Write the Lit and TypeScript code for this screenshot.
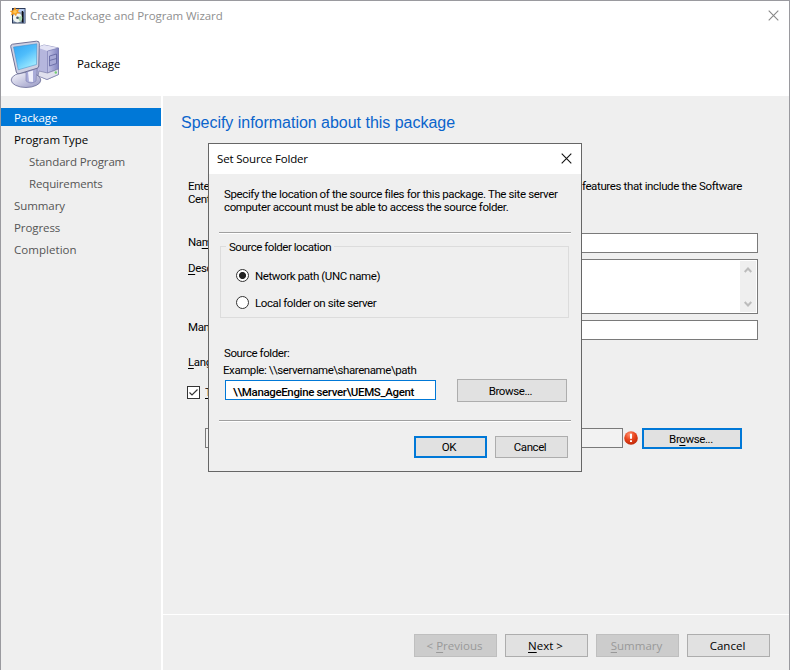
import { LitElement, html, css, svg } from "lit";
import { customElement } from "lit/decorators.js";
import { classMap } from "lit/directives/class-map.js";

interface Step { label: string; kind: "active" | "visited" | "pending"; sub?: boolean; cls: string }

const STEPS: Step[] = [
  { label: "Package", kind: "active", cls: "package" },
  { label: "Program Type", kind: "visited", cls: "type" },
  { label: "Standard Program", kind: "pending", sub: true, cls: "standard" },
  { label: "Requirements", kind: "pending", sub: true, cls: "req" },
  { label: "Summary", kind: "pending", cls: "summary" },
  { label: "Progress", kind: "pending", cls: "progress" },
  { label: "Completion", kind: "pending", cls: "completion" },
];

const cross = (color: string) => svg`<path d="M0.7 0.7L10.3 10.3M10.3 0.7L0.7 10.3" fill="none" stroke=${color} stroke-width="1.1"/>`;

@customElement("source-dialog")
export class SourceDialog extends LitElement {
  static styles = css`
    :host { display: flex; flex-direction: column; box-sizing: border-box; width: 374px; height: 329px; border: 1px solid #666; background: #efefef; font: 11.5px/13px Roboto, "Liberation Sans", sans-serif; letter-spacing: -0.4px; color: #000; }
    * { box-sizing: border-box; }
    .title { display: flex; align-items: center; justify-content: space-between; height: 30px; padding: 0 9px 0 8px; background: #fff; font: 11.5px/16px "Open Sans", "Noto Sans", sans-serif; letter-spacing: -0.17px; color: #000; flex: none; }
    .title svg { margin-top: -2px; }
    .body { display: flex; flex-direction: column; padding: 0 10px; }
    .intro { margin: 14px 0 0 5px; white-space: nowrap; letter-spacing: -0.375px; }
    .rule { height: 2px; background: #a0a0a0; border-bottom: 1px solid #fff; }
    .r1 { margin-top: 18px; }
    .group { margin: 12px 2px 0 1px; height: 72px; border: 1px solid #dcdcdc; display: flex; flex-direction: column; align-items: flex-start; padding-left: 5px; }
    .legend { margin: -7px 0 -1px; padding: 1px 3px 0; background: #efefef; letter-spacing: -0.46px; }
    .radio { display: flex; align-items: center; gap: 6px; margin-left: 10px; height: 13px; }
    .radio span:last-child { padding-top: 2px; }
    .a { margin-top: 16px; } .b { margin-top: 14px; }
    .dot { width: 13px; height: 13px; border: 1px solid #333; border-radius: 50%; background: #fff; }
    .on { background: radial-gradient(circle at center, #222 3.1px, #fff 3.9px); }
    .label { margin: 29px 0 0 5px; letter-spacing: -0.41px; }
    .example { margin: 4px 0 0 4px; letter-spacing: -0.43px; }
    .row { display: flex; align-items: flex-start; margin: 2px 4px 0 6px; justify-content: space-between; }
    .field { width: 211px; height: 20px; margin-top: 1px; border: 1px solid #0078d7; background: #fff; padding: 1px 0 0 7px; font: 500 11.5px/20px Roboto, sans-serif; letter-spacing: -0.36px; white-space: nowrap; color: #000; }
    .btn { display: flex; align-items: center; justify-content: center; border: 1px solid #adadad; background: #e1e1e1; padding: 1px 3px 0 0; letter-spacing: -0.42px; }
    .browse { width: 110px; height: 23px; }
    .r2 { margin-top: 18px; }
    .actions { display: flex; justify-content: flex-end; gap: 8px; margin: 14px 3px 0 0; }
    .small { width: 73px; height: 22px; }
    .primary { border: 2px solid #0078d7; }
  `;
  render() {
    return html`
      <div class="title"><span>Set Source Folder</span><svg width="11" height="11">${cross("#111")}</svg></div>
      <div class="body">
        <div class="intro">Specify the location of the source files for this package. The site server<br />computer account must be able to access the source folder.</div>
        <div class="rule r1"></div>
        <div class="group">
          <span class="legend">Source folder location</span>
          <div class="radio a"><span class="dot on"></span><span>Network path (UNC name)</span></div>
          <div class="radio b"><span class="dot"></span><span>Local folder on site server</span></div>
        </div>
        <div class="label">Source folder:</div>
        <div class="example">Example: \\\\servername\\sharename\\path</div>
        <div class="row"><div class="field">\\\\ManageEngine server\\UEMS_Agent</div><div class="btn browse">Browse...</div></div>
        <div class="rule r2"></div>
        <div class="actions"><div class="btn small primary">OK</div><div class="btn small">Cancel</div></div>
      </div>`;
  }
}

@customElement("app-root")
export class AppRoot extends LitElement {
  static styles = css`
    :host { display: flex; flex-direction: column; position: relative; box-sizing: border-box; width: 790px; height: 670px; overflow: hidden; border: 1px solid #9a9a9f; border-bottom: 0; background: #fff; font: 11.5px/16px "Open Sans", "Noto Sans", sans-serif; letter-spacing: -0.08px; color: #000; }
    * { box-sizing: border-box; }
    .titlebar { display: flex; align-items: center; height: 29px; padding: 0 10px 0 9px; color: #8f8f8f; flex: none; }
    .titlebar .name { flex: 1; margin-left: 4px; padding-top: 1px; }
    .banner { display: flex; align-items: center; height: 66px; padding: 2px 0 0 8px; flex: none; }
    .banner .name { margin-left: 16px; }
    .frame { display: flex; flex: 1; min-height: 0; background: #efefef; }
    .steps { display: flex; flex-direction: column; gap: 4px; width: 162px; padding-top: 12px; border-right: 2px solid #fff; flex: none; }
    .step { height: 18px; line-height: 20px; padding-left: 13px; color: #555; white-space: nowrap; }
    .sub { padding-left: 28px; letter-spacing: -0.15px; }
    .completion { letter-spacing: 0.05px; }
    .visited { color: #000; }
    .active { background: #0078d7; color: #fff; }
    .main { display: flex; flex-direction: column; flex: 1; min-width: 0; }
    .content { box-sizing: content-box; height: 501px; padding: 17px 0 0 18px; border-bottom: 1px solid #fff; font: 11.5px/13px Roboto, "Liberation Sans", sans-serif; letter-spacing: -0.39px; color: #000; }
    h1 { margin: 0; font: 16px/20px "Liberation Sans", Arial, sans-serif; letter-spacing: -0.02px; color: #0a64cc; }
    .intro { display: flex; justify-content: space-between; margin: 47px 47px 0 7px; height: 26px; }
    .cut { width: 22px; overflow: hidden; white-space: nowrap; }
    .tail { letter-spacing: -0.37px; }
    .form { display: grid; grid-template-columns: 90px 1fr; margin: 27px 31px 0 7px; row-gap: 6px; }
    .lbl { padding-top: 3px; }
    .low { padding-top: 1px; }
    .box { height: 20px; border: 1px solid #7a7a7a; background: #fff; }
    .area { height: 55px; display: flex; justify-content: flex-end; padding: 1px; }
    .scroll { width: 16px; background: #efefef; display: flex; flex-direction: column; justify-content: space-between; align-items: center; padding: 6px 0 5px; }
    .lang { height: 16px; margin: 16px 0 0 7px; }
    .check { display: flex; gap: 5px; align-items: center; margin: 14px 0 0 6px; height: 13px; }
    .check span { width: 4px; overflow: hidden; white-space: nowrap; padding-bottom: 3px; margin-bottom: -3px; }
    .tick { display: block; }
    .source { display: flex; margin: 29px 0 0 24px; }
    .path { width: 418px; background: #f2f2f2; }
    .warn { margin: 3px 4px 0 1px; }
    .btn { display: flex; align-items: center; justify-content: center; border: 1px solid #adadad; background: #e1e1e1; }
    .focus { width: 100px; height: 21px; border: 2px solid #0078d7; padding: 2px 2px 0 0; }
    .footer { display: flex; justify-content: flex-end; gap: 8px; padding: 19px 19px 0 0; letter-spacing: 0.02px; }
    .nav { width: 83px; height: 23px; white-space: pre; padding: 1px 2px 0 0; }
    .off { background: #ccc; border-color: #bfbfbf; color: #999; }
    u { text-underline-offset: 2px; }
    source-dialog { position: absolute; left: 207px; top: 142px; }
  `;

  private appIcon() {
    return svg`<svg width="16" height="17" viewBox="0 0 16 17">
      <rect x="2" y="1" width="13.500" height="15.500" fill="#2c3a58"/><rect x="4" y="2" width="10" height="3" fill="#b9cdf0"/>
      <rect x="3" y="5" width="9" height="10.500" fill="#8fa3bd"/><path d="M12.500 4v11" stroke="#111" stroke-width="1.500"/><path d="M14.300 2v14" stroke="#93a9d2"/>
      <circle cx="7.500" cy="10.800" r="4.600" fill="#f1f5f2"/>
      <path d="M7.500 10.800L11.600 8.800A4.600 4.600 0 0 1 10 14.700Z" fill="#a9d8b0"/><circle cx="7.500" cy="10.800" r="1.300" fill="#4c5a6c"/>
      <path d="M5 0l1.200 2.700L9.500 1.800 8 4.500 10.500 6.300 7 6.500 6 9.300 4 7 .8 8.500 1.800 5.700-.2 4 3 3.300Z" fill="#f59a1d"/><circle cx="5" cy="4.800" r="1.800" fill="#ffc855"/>
    </svg>`;
  }

  private computerIcon() {
    return svg`<svg width="52" height="50" viewBox="0 0 52 50">
      <defs>
        <linearGradient id="screen" x1="0" y1="0" x2=".6" y2="1"><stop offset="0" stop-color="#2fa4f2"/><stop offset=".5" stop-color="#4fbdfb"/><stop offset="1" stop-color="#a0ecff"/></linearGradient>
        <linearGradient id="front"><stop offset="0" stop-color="#c3c4e6"/><stop offset="1" stop-color="#8083c0"/></linearGradient>
        <linearGradient id="base" x1="0" y1="0" x2="1" y2="1"><stop offset="0" stop-color="#fafaff"/><stop offset="1" stop-color="#9495c2"/></linearGradient>
      </defs>
      <path d="M28 8.500L35 6 49.500 9 49.500 35.500 38 40.500 28 36Z" fill="#b5b6dd" stroke="#8588b8" stroke-width=".8"/>
      <path d="M28 8.500L35 6 49.500 9 38.500 12Z" fill="#e3e3f5"/><path d="M38.500 12L49.500 9V30L38.500 34Z" fill="url(#front)" stroke="#7476ad" stroke-width=".6"/>
      <path d="M40.500 17L47.500 15V24.500L40.500 27ZM40.500 21.500L47.500 19.500" fill="#a7a9d6" stroke="#5e629d" stroke-width=".8"/>
      <path d="M30 32L38.500 34 49.500 30V35.500L38 40.500 29 37Z" fill="#e0e0ee" stroke="#7b7da8" stroke-width=".7"/><circle cx="46.800" cy="33.500" r="1.200" fill="#72cf70"/>
      <ellipse cx="17" cy="41" rx="14.800" ry="7.500" fill="url(#base)" stroke="#76789f" stroke-width=".9"/>
      <path d="M17 32L28 29 27 42Q22 46 17 42Z" fill="#a9abd8" stroke="#8082b0" stroke-width=".6"/><path d="M19 33L24 31.500 24 43 20 42.500Z" fill="#f0f0fc"/>
      <path d="M1.700 7.500Q1.600 5.600 3.500 5.200L27.500 2.200Q30.400 2 30.300 4.500L29.800 27Q29.600 28.800 28 29.300L10 34.800Q7.800 35 7.300 33Z" fill="#cfd0e2" stroke="#6f7196" stroke-width="1"/>
      <path d="M4.500 8L27.800 4.800 27.500 25.500 9.300 30.800Z" fill="url(#screen)" stroke="#3c8bc7" stroke-width=".5"/>
    </svg>`;
  }

  render() {
    return html`
      <div class="titlebar">${this.appIcon()}<span class="name">Create Package and Program Wizard</span><svg width="11" height="11">${cross("#888")}</svg></div>
      <div class="banner">${this.computerIcon()}<span class="name">Package</span></div>
      <div class="frame">
        <div class="steps">${STEPS.map((s) => html`<div class=${classMap({ step: true, [s.kind]: true, sub: !!s.sub, [s.cls]: true })}><span>${s.label}</span></div>`)}</div>
        <div class="main">
          <div class="content">
            <h1>Specify information about this package</h1>
            <div class="intro"><span class="cut">Enter<br />Cente</span><span class="tail">features that include the Software</span></div>
            <div class="form">
              <span class="lbl cut">Na<u>m</u>e</span><div class="box"></div>
              <span class="lbl cut"><u>D</u>esc</span>
              <div class="box area"><div class="scroll">
                <svg width="8" height="6"><path d="M.7 5L4 1.500 7.300 5" fill="none" stroke="#bcbcbc" stroke-width="2"/></svg>
                <svg width="8" height="6"><path d="M.7 1L4 4.500 7.300 1" fill="none" stroke="#bcbcbc" stroke-width="2"/></svg>
              </div></div>
              <span class="lbl low cut">Manu</span><div class="box"></div>
            </div>
            <div class="lang cut"><u>L</u>ang</div>
            <div class="check"><svg class="tick" width="13" height="13"><rect x=".5" y=".5" width="12" height="12" fill="#fff" stroke="#333"/><path d="M2.500 6.500L5 9 10.500 3.500" fill="none" stroke="#333" stroke-width="1.200"/></svg><span><u>T</u></span></div>
            <div class="source">
              <div class="box path"></div>
              <svg class="warn" width="14" height="14" viewBox="0 0 14 14"><defs><radialGradient id="red" cx=".4" cy=".25" r=".8"><stop offset="0" stop-color="#ff9170"/><stop offset=".5" stop-color="#e8431b"/><stop offset="1" stop-color="#b92607"/></radialGradient></defs><circle cx="7" cy="7" r="6.800" fill="url(#red)"/><path d="M7 2.800V7.800M7 9.300V11" stroke="#fff" stroke-width="2"/></svg>
              <div class="btn focus"><span>Br<u>o</u>wse...</span></div>
            </div>
          </div>
          <div class="footer">
            <div class="btn nav off"><span>&lt; <u>P</u>revious</span></div>
            <div class="btn nav"><span><u>N</u>ext &gt;</span></div>
            <div class="btn nav off"><span><u>S</u>ummary</span></div>
            <div class="btn nav"><span>Cancel</span></div>
          </div>
        </div>
      </div>
      <source-dialog></source-dialog>`;
  }
}
